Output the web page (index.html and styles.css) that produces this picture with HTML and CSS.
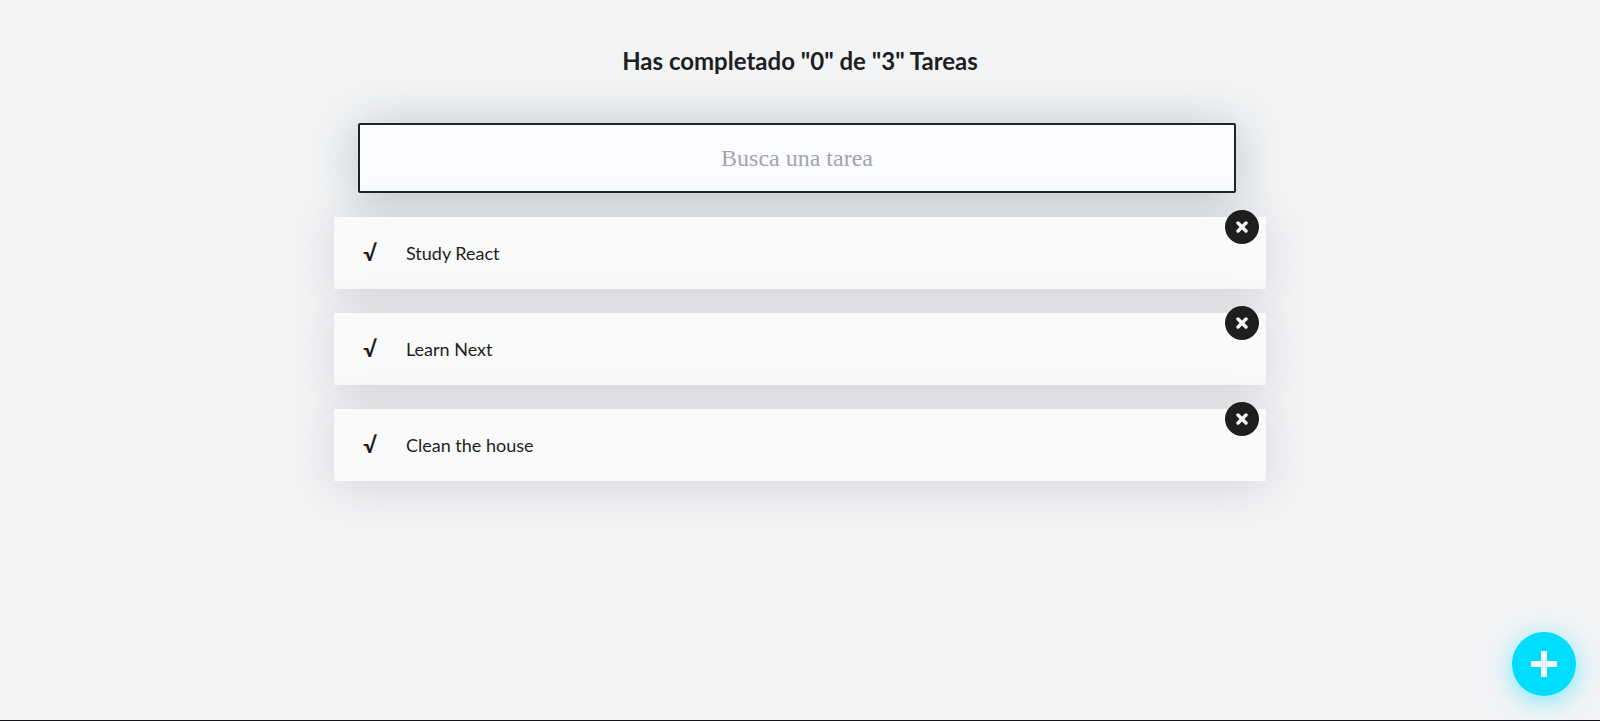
FILE: index.html
```html
<!DOCTYPE html>
<html lang="es">
<head>
<meta charset="utf-8">
<meta name="viewport" content="width=device-width, initial-scale=1">
<title>Tareas</title>
<link rel="stylesheet" href="styles.css">
</head>
<body>
<main class="app">
  <h1 class="counter">Has completado "0" de "3" Tareas</h1>
  <input class="search" type="text" placeholder="Busca una tarea" aria-label="Busca una tarea">
  <ul class="list">
    <li class="item">
      <button class="check" type="button" aria-label="Completar Study React">√</button>
      <p class="item-text">Study React</p>
      <button class="delete" type="button" aria-label="Eliminar Study React"><svg class="delete-icon" viewBox="0 0 12 12" aria-hidden="true"><path d="M2 2l8 8M10 2l-8 8"/></svg></button>
    </li>
    <li class="item">
      <button class="check" type="button" aria-label="Completar Learn Next">√</button>
      <p class="item-text">Learn Next</p>
      <button class="delete" type="button" aria-label="Eliminar Learn Next"><svg class="delete-icon" viewBox="0 0 12 12" aria-hidden="true"><path d="M2 2l8 8M10 2l-8 8"/></svg></button>
    </li>
    <li class="item">
      <button class="check" type="button" aria-label="Completar Clean the house">√</button>
      <p class="item-text">Clean the house</p>
      <button class="delete" type="button" aria-label="Eliminar Clean the house"><svg class="delete-icon" viewBox="0 0 12 12" aria-hidden="true"><path d="M2 2l8 8M10 2l-8 8"/></svg></button>
    </li>
  </ul>
</main>
<button class="create" type="button" aria-label="Crear tarea"><svg class="create-icon" viewBox="0 0 26 26" aria-hidden="true"><path d="M13 0v26M0 13h26"/></svg></button>
</body>
</html>
```
FILE: styles.css
```css
* {
  box-sizing: border-box;
}

body {
  margin: 0;
  min-height: 100vh;
  background: #f2f4f6;
  border-bottom: 1px solid #16131f;
  color: #1e1e1f;
  font-family: Lato, "Liberation Sans", sans-serif;
}

.app {
  max-width: 932px;
  margin: 0 auto;
}

.counter {
  margin: 0;
  padding: 46px 24px 48px;
  font-size: 24px;
  line-height: 29px;
  font-weight: 700;
  text-align: center;
}

.search {
  display: block;
  width: calc(100% - 54px);
  height: 70px;
  margin: 0 24px;
  padding: 0;
  background: #fafcff;
  border: 2px solid #202329;
  border-radius: 2px;
  box-shadow: 0 5px 50px rgba(32, 35, 41, 0.25);
  color: #1e1e1f;
  font-family: "Liberation Serif", serif;
  font-size: 24px;
  text-align: center;
}

.search::placeholder {
  color: #a5a5a5;
}

.list {
  display: flex;
  flex-direction: column;
  gap: 24px;
  margin: 24px 0;
  padding: 0;
  list-style: none;
}

.item {
  position: relative;
  display: flex;
  align-items: center;
  background: #fafafa;
  box-shadow: 0 5px 50px rgba(32, 35, 41, 0.15);
}

.check {
  width: 72px;
  height: 72px;
  padding: 0;
  background: none;
  border: 0;
  color: inherit;
  font: 700 22px/28px Lato, sans-serif;
  cursor: pointer;
}

.item-text {
  flex: 1;
  margin: 0;
  font-size: 18px;
  line-height: 24px;
}

.delete {
  position: absolute;
  top: -7px;
  right: 7px;
  display: grid;
  place-items: center;
  width: 34px;
  height: 34px;
  padding: 0;
  background: #1e1e1f;
  border: 0;
  border-radius: 50%;
  cursor: pointer;
}

.delete-icon {
  width: 12px;
  height: 12px;
  fill: none;
  stroke: #fafafa;
  stroke-width: 3.4;
  stroke-linecap: round;
}

.create {
  position: fixed;
  right: 24px;
  bottom: 25px;
  display: grid;
  place-items: center;
  width: 64px;
  height: 64px;
  padding: 0;
  background: #00ddff;
  border: 0;
  border-radius: 50%;
  box-shadow: 0 5px 25px rgba(0, 221, 255, 0.5);
  cursor: pointer;
}

.create-icon {
  width: 26px;
  height: 26px;
  fill: none;
  stroke: #fafafa;
  stroke-width: 6;
}
```
